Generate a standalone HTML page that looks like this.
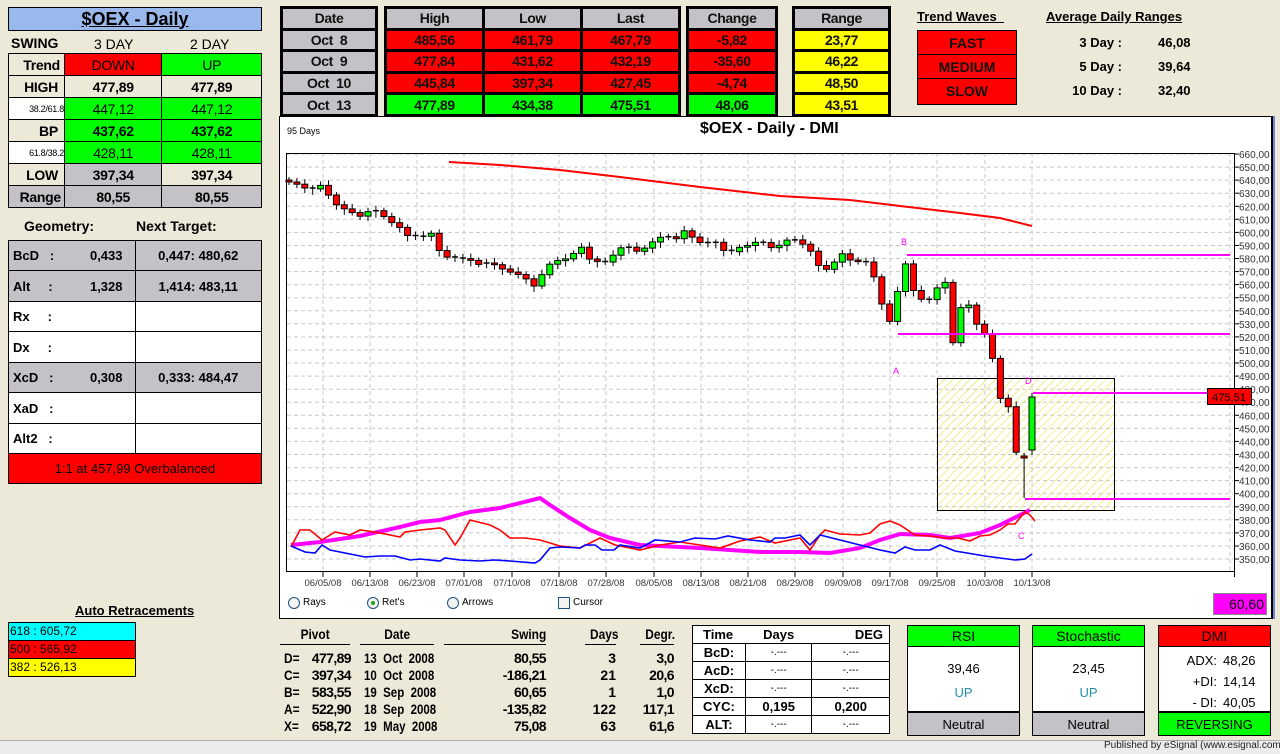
<!DOCTYPE html>
<html><head><meta charset="utf-8"><style>
*{box-sizing:border-box;margin:0;padding:0}
body{width:1280px;height:754px;background:#ece9d8;font-family:"Liberation Sans",Arial,sans-serif;position:relative;overflow:hidden;color:#000}
.a{position:absolute}
.c{display:flex;align-items:center;justify-content:center}
.t{position:absolute;border-collapse:collapse}
.t td{border:1px solid #000;text-align:center;font-size:14px;padding:0}
.red{background:#ff0000}.grn{background:#00ff00}.gry{background:#c4c2c6}.yel{background:#ffff00}.wht{background:#fff}.bg{background:#ece9d8}
.bx{position:absolute;border:3px solid #000;border-collapse:collapse}
.bx td{border:3px solid #000;text-align:center;font-size:14px;padding:0;font-weight:bold;letter-spacing:-0.4px;color:#111}
.lt td{font-weight:bold;letter-spacing:-0.3px}
.n{font-size:14px;transform:scaleX(.85);transform-origin:left center;white-space:nowrap}
</style></head><body>

<div class="a c" style="left:8px;top:7px;width:254px;height:24px;background:#99b9ec;border:1px solid #000;font-weight:bold;font-size:18px;text-decoration:underline">$OEX - Daily</div>
<div class="a" style="left:11px;top:35px;font-size:14px;font-weight:bold">SWING</div>
<div class="a" style="left:94px;top:36px;font-size:14px">3 DAY</div>
<div class="a" style="left:190px;top:36px;font-size:14px">2 DAY</div>
<table class="t lt" style="left:8px;top:53px;width:254px">
<colgroup><col style="width:56px"><col style="width:98px"><col style="width:100px"></colgroup>
<tr style="height:22px"><td class="bg" style="text-align:right;padding-right:4px">Trend</td><td class="red" style="font-weight:normal">DOWN</td><td class="grn" style="font-weight:normal">UP</td></tr>
<tr style="height:22px"><td class="bg" style="text-align:right;padding-right:6px">HIGH</td><td class="bg">477,89</td><td class="bg">477,89</td></tr>
<tr style="height:22px"><td class="wht" style="font-size:9px;text-align:right;font-weight:normal">38.2/61.8</td><td class="grn" style="font-weight:normal">447,12</td><td class="grn" style="font-weight:normal">447,12</td></tr>
<tr style="height:22px"><td class="bg" style="text-align:right;padding-right:6px">BP</td><td class="grn">437,62</td><td class="grn">437,62</td></tr>
<tr style="height:22px"><td class="wht" style="font-size:9px;text-align:right;font-weight:normal">61.8/38.2</td><td class="grn" style="font-weight:normal">428,11</td><td class="grn" style="font-weight:normal">428,11</td></tr>
<tr style="height:22px"><td class="bg" style="text-align:right;padding-right:6px">LOW</td><td class="gry">397,34</td><td class="bg">397,34</td></tr>
<tr style="height:22px"><td class="gry" style="text-align:right;padding-right:3px">Range</td><td class="gry">80,55</td><td class="gry">80,55</td></tr>
</table>
<div class="a" style="left:24px;top:218px;font-size:14px;font-weight:bold">Geometry:</div>
<div class="a" style="left:136px;top:218px;font-size:14px;font-weight:bold">Next Target:</div>
<table class="t" style="left:8px;top:240px;width:254px">
<colgroup><col style="width:127px"><col style="width:127px"></colgroup>
<tr style="height:30px" class="gry"><td style="text-align:left;padding-left:4px;font-size:13px;font-weight:bold">BcD&nbsp;&nbsp;&nbsp;:<span style="float:right;margin-right:12px">0,433</span></td><td style="font-size:13px;font-weight:bold">0,447: 480,62</td></tr>
<tr style="height:31px" class="gry"><td style="text-align:left;padding-left:4px;font-size:13px;font-weight:bold">Alt&nbsp;&nbsp;&nbsp;&nbsp;&nbsp;:<span style="float:right;margin-right:12px">1,328</span></td><td style="font-size:13px;font-weight:bold">1,414: 483,11</td></tr>
<tr style="height:30px" class="wht"><td style="text-align:left;padding-left:4px;font-size:13px;font-weight:bold">Rx&nbsp;&nbsp;&nbsp;&nbsp;&nbsp;:</td><td></td></tr>
<tr style="height:31px" class="wht"><td style="text-align:left;padding-left:4px;font-size:13px;font-weight:bold">Dx&nbsp;&nbsp;&nbsp;&nbsp;&nbsp;:</td><td></td></tr>
<tr style="height:30px" class="gry"><td style="text-align:left;padding-left:4px;font-size:13px;font-weight:bold">XcD&nbsp;&nbsp;&nbsp;:<span style="float:right;margin-right:12px">0,308</span></td><td style="font-size:13px;font-weight:bold">0,333: 484,47</td></tr>
<tr style="height:31px" class="wht"><td style="text-align:left;padding-left:4px;font-size:13px;font-weight:bold">XaD&nbsp;&nbsp;&nbsp;:</td><td></td></tr>
<tr style="height:30px" class="wht"><td style="text-align:left;padding-left:4px;font-size:13px;font-weight:bold">Alt2&nbsp;&nbsp;&nbsp;:</td><td></td></tr>
<tr style="height:30px" class="red"><td colspan="2" style="font-size:13px">1:1 at 457,99 Overbalanced</td></tr>
</table>
<div class="a" style="left:75px;top:603px;font-size:13px;font-weight:bold;text-decoration:underline">Auto Retracements</div>
<div class="a" style="left:8px;top:622px;width:128px;height:55px;border:1px solid #000;font-size:12px">
<div style="height:18px;background:#00ffff;border-bottom:1px solid #000;padding-left:1px;line-height:17px">618 : 605,72</div>
<div style="height:18px;background:#ff0000;border-bottom:1px solid #000;padding-left:1px;line-height:17px">500 : 565,92</div>
<div style="height:17px;background:#ffff00;padding-left:1px;line-height:17px">382 : 526,13</div>
</div>

<table class="bx" style="left:280px;top:6px;width:98px;height:111px">
<tr><td class="gry">Date</td></tr><tr><td class="gry">Oct&nbsp; 8</td></tr><tr><td class="gry">Oct&nbsp; 9</td></tr><tr><td class="gry">Oct&nbsp; 10</td></tr><tr><td class="gry">Oct&nbsp; 13</td></tr>
</table>
<table class="bx" style="left:384px;top:6px;width:297px;height:111px">
<tr class="gry"><td>High</td><td>Low</td><td>Last</td></tr>
<tr class="red"><td>485,56</td><td>461,79</td><td>467,79</td></tr>
<tr class="red"><td>477,84</td><td>431,62</td><td>432,19</td></tr>
<tr class="red"><td>445,84</td><td>397,34</td><td>427,45</td></tr>
<tr class="grn"><td>477,89</td><td>434,38</td><td>475,51</td></tr>
</table>
<table class="bx" style="left:686px;top:6px;width:92px;height:111px">
<tr><td class="gry">Change</td></tr><tr><td class="red">-5,82</td></tr><tr><td class="red">-35,60</td></tr><tr><td class="red">-4,74</td></tr><tr><td class="grn">48,06</td></tr>
</table>
<table class="bx" style="left:792px;top:6px;width:99px;height:111px">
<tr><td class="gry">Range</td></tr><tr><td class="yel">23,77</td></tr><tr><td class="yel">46,22</td></tr><tr><td class="yel">48,50</td></tr><tr><td class="yel">43,51</td></tr>
</table>
<div class="a" style="left:917px;top:9px;font-size:13px;font-weight:bold;text-decoration:underline">Trend Waves&nbsp;&nbsp;</div>
<div class="a" style="left:917px;top:30px;width:100px;height:75px;border:1px solid #000;background:#f00;font-size:14px;font-weight:bold;color:#111">
<div class="c" style="height:24px;border-bottom:1px solid #000">FAST</div>
<div class="c" style="height:24px;border-bottom:1px solid #000">MEDIUM</div>
<div class="c" style="height:24px">SLOW</div></div>
<div class="a" style="left:1046px;top:9px;font-size:13px;font-weight:bold;text-decoration:underline">Average Daily Ranges</div>
<div class="a" style="left:1040px;top:31px;width:82px;text-align:right;font-size:13px;line-height:24px;font-weight:bold">3 Day :<br>5 Day :<br>10 Day :</div>
<div class="a" style="left:1158px;top:31px;font-size:13px;line-height:24px;font-weight:bold">46,08<br>39,64<br>32,40</div>

<div class="a" style="left:279px;top:116px;width:994px;height:503px;background:#fff;border:1px solid #000;border-right:2px solid #000"></div>
<div class="a" style="left:1273px;top:116px;width:2px;height:503px;background:#6a86d6"></div>
<div class="a" style="left:287px;top:126px;font-size:9px">95 Days</div>
<div class="a" style="left:700px;top:120px;font-size:16px;font-weight:bold">$OEX - Daily - DMI</div>
<svg id="ch" class="a" style="left:0;top:0" width="1280" height="754" xmlns="http://www.w3.org/2000/svg"></svg>
<div class="a" style="left:1213px;top:593px;width:54px;height:22px;background:#ff00ff;border:1px solid #888;font-size:14px;text-align:right;padding-right:2px;line-height:21px">60,60</div>
<div class="a" style="left:288px;top:597px;width:12px;height:12px;border:1px solid #1c5180;border-radius:50%;background:#f4f4f0"></div>
<div class="a" style="left:303px;top:597px;font-size:10px">Rays</div>
<div class="a" style="left:367px;top:597px;width:12px;height:12px;border:1px solid #1c5180;border-radius:50%;background:#f4f4f0"><div style="width:4px;height:4px;background:#21a121;border-radius:50%;margin:3px"></div></div>
<div class="a" style="left:382px;top:597px;font-size:10px">Ret's</div>
<div class="a" style="left:447px;top:597px;width:12px;height:12px;border:1px solid #1c5180;border-radius:50%;background:#f4f4f0"></div>
<div class="a" style="left:462px;top:597px;font-size:10px">Arrows</div>
<div class="a" style="left:558px;top:597px;width:12px;height:12px;border:1px solid #1c5180;background:#f4f4f0"></div>
<div class="a" style="left:573px;top:597px;font-size:10px">Cursor</div>

<div class="a" style="left:280px;top:626px;width:70px;border-bottom:1px solid #000;text-align:center;font-weight:bold"><span class="n" style="display:inline-block;transform-origin:center">Pivot</span></div>
<div class="a" style="left:360px;top:626px;width:74px;border-bottom:1px solid #000;text-align:center;font-weight:bold"><span class="n" style="display:inline-block;transform-origin:center">Date</span></div>
<div class="a" style="left:444px;top:626px;width:102px;border-bottom:1px solid #000;text-align:right;font-weight:bold"><span class="n" style="display:inline-block;transform-origin:right">Swing</span></div>
<div class="a" style="left:585px;top:626px;width:31px;border-bottom:1px solid #000;text-align:right;font-weight:bold"><span class="n" style="display:inline-block;transform-origin:right">Days</span></div>
<div class="a" style="left:640px;top:626px;width:34px;border-bottom:1px solid #000;text-align:right;font-weight:bold"><span class="n" style="display:inline-block;transform-origin:right">Degr.</span></div>
<div class="a" style="left:284px;top:650px;font-size:14px;line-height:17px;transform:scaleX(.85);transform-origin:left;font-weight:bold">D=<br>C=<br>B=<br>A=<br>X=</div>
<div class="a" style="left:296px;top:650px;width:55px;text-align:right;font-size:14px;line-height:17px;font-weight:bold;letter-spacing:-0.6px">477,89<br>397,34<br>583,55<br>522,90<br>658,72</div>
<div class="a" style="left:364px;top:650px;font-size:14px;line-height:17px;white-space:pre;transform:scaleX(.82);transform-origin:left;font-weight:bold">13  Oct  2008
10  Oct  2008
19  Sep  2008
18  Sep  2008
19  May  2008</div>
<div class="a" style="left:476px;top:650px;width:70px;text-align:right;font-size:14px;line-height:17px;font-weight:bold;letter-spacing:-0.6px">80,55<br>-186,21<br>60,65<br>-135,82<br>75,08</div>
<div class="a" style="left:580px;top:650px;width:36px;text-align:right;font-size:14px;line-height:17px;font-weight:bold">3<br>21<br>1<br>122<br>63</div>
<div class="a" style="left:626px;top:650px;width:48px;text-align:right;font-size:14px;line-height:17px;font-weight:bold;letter-spacing:-0.6px">3,0<br>20,6<br>1,0<br>117,1<br>61,6</div>

<table class="t" style="left:692px;top:625px;width:198px;background:#fff">
<colgroup><col style="width:53px"><col style="width:67px"><col style="width:78px"></colgroup>
<tr style="height:18px"><td style="border:none;border-top:1px solid #000;border-left:1px solid #000;text-align:left;padding-left:10px;font-size:13px;font-weight:bold">Time</td><td style="border:none;border-top:1px solid #000;font-size:13px;font-weight:bold">Days</td><td style="border:none;border-top:1px solid #000;border-right:1px solid #000;text-align:right;padding-right:6px;font-size:13px;font-weight:bold">DEG</td></tr>
<tr style="height:18px"><td style="font-size:13px;font-weight:bold">BcD:</td><td style="font-size:10px">-.---</td><td style="font-size:10px">-.---</td></tr>
<tr style="height:18px"><td style="font-size:13px;font-weight:bold">AcD:</td><td style="font-size:10px">-.---</td><td style="font-size:10px">-.---</td></tr>
<tr style="height:18px"><td style="font-size:13px;font-weight:bold">XcD:</td><td style="font-size:10px">-.---</td><td style="font-size:10px">-.---</td></tr>
<tr style="height:18px"><td style="font-size:13px;font-weight:bold">CYC:</td><td style="font-size:13px;font-weight:bold">0,195</td><td style="font-size:13px;font-weight:bold">0,200</td></tr>
<tr style="height:18px"><td style="font-size:13px;font-weight:bold">ALT:</td><td style="font-size:10px">-.---</td><td style="font-size:10px">-.---</td></tr>
</table>

<div class="a" style="left:907px;top:625px;width:113px;height:111px;border:1px solid #000;background:#fff;font-size:13px">
<div class="c grn" style="height:21px;border-bottom:1px solid #000;font-size:14px">RSI</div>
<div style="text-align:center;margin-top:14px">39,46</div>
<div style="text-align:center;margin-top:9px;color:#1f8fa8">UP</div>
<div class="c gry" style="position:absolute;bottom:0;left:0;right:0;height:24px;border-top:2px solid #000">Neutral</div></div>
<div class="a" style="left:1032px;top:625px;width:113px;height:111px;border:1px solid #000;background:#fff;font-size:13px">
<div class="c grn" style="height:21px;border-bottom:1px solid #000;font-size:14px">Stochastic</div>
<div style="text-align:center;margin-top:14px">23,45</div>
<div style="text-align:center;margin-top:9px;color:#1f8fa8">UP</div>
<div class="c gry" style="position:absolute;bottom:0;left:0;right:0;height:24px;border-top:2px solid #000">Neutral</div></div>
<div class="a" style="left:1158px;top:625px;width:113px;height:111px;border:1px solid #000;background:#fff;font-size:13px">
<div class="c red" style="height:21px;border-bottom:1px solid #000;font-size:14px">DMI</div>
<div style="position:absolute;left:0;top:24px;width:58px;text-align:right;line-height:21px">ADX:<br>+DI:<br>- DI:</div>
<div style="position:absolute;left:64px;top:24px;line-height:21px">48,26<br>14,14<br>40,05</div>
<div class="c grn" style="position:absolute;bottom:0;left:0;right:0;height:24px;border-top:2px solid #000">REVERSING</div></div>

<div class="a" style="left:0;top:740px;width:1280px;height:14px;background:#ececec;border-top:1px solid #b0b0b0"></div>
<div class="a" style="left:1104px;top:740px;font-size:10px;color:#222;white-space:nowrap">Published by eSignal (www.esignal.com)</div>

<script>
var s=document.getElementById('ch'),h='';
function Y(p){return 154+(660-p)*1.3065}
h+='<defs><pattern id="hp" width="6" height="6" patternUnits="userSpaceOnUse" patternTransform="rotate(45)"><line x1="0" y1="0" x2="0" y2="6" stroke="#e8e020" stroke-width="1"/></pattern></defs>';
for(var p=350;p<=660;p+=10){var y=Y(p).toFixed(1);h+='<line x1="287" y1="'+y+'" x2="1233" y2="'+y+'" stroke="#c8c8c8" stroke-dasharray="4,3"/>';
h+='<line x1="1234" y1="'+y+'" x2="1239" y2="'+y+'" stroke="#000"/>';
h+='<text x="1239" y="'+(+y+4)+'" font-size="10" fill="#333" font-family="Liberation Sans">'+p+',00</text>';}
var dx=[323,370,417,464,512,559,606,654,701,748,795,843,890,937,985,1032],dl=['06/05/08','06/13/08','06/23/08','07/01/08','07/10/08','07/18/08','07/28/08','08/05/08','08/13/08','08/21/08','08/29/08','09/09/08','09/17/08','09/25/08','10/03/08','10/13/08'];
for(var i=0;i<dx.length;i++){h+='<line x1="'+dx[i]+'" y1="153" x2="'+dx[i]+'" y2="571" stroke="#c8c8c8" stroke-dasharray="4,3"/><line x1="'+dx[i]+'" y1="571" x2="'+dx[i]+'" y2="577" stroke="#000"/>';
h+='<text x="'+dx[i]+'" y="586" font-size="9.5" text-anchor="middle" fill="#333" font-family="Liberation Sans">'+dl[i]+'</text>';}
h+='<line x1="1230" y1="153" x2="1230" y2="571" stroke="#c8c8c8" stroke-dasharray="4,3"/>';
h+='<path d="M286.5 571V153.5H1234.5V577" fill="none" stroke="#000"/><line x1="286" y1="571.5" x2="1234" y2="571.5" stroke="#000"/>';
h+='<rect x="937.5" y="378.5" width="177" height="132" fill="url(#hp)" stroke="#000"/>';
h+='<polyline fill="none" stroke="#f00" stroke-width="2" points="449,162 500,165 560,170 620,177 700,187 780,196 850,200 900,206 960,213 1000,218 1032,226"/>';
var k=[[289,182],[300,185],[308,190],[316,188],[323,184],[331,200],[340,208],[350,210],[357,218],[367,212],[375,210],[382,215],[390,222],[398,225],[405,235],[415,237],[425,236],[432,233],[441,255],[450,258],[460,258],[470,260],[480,265],[490,262],[500,268],[510,272],[520,275],[528,280],[536,288],[544,270],[552,262],[560,260],[570,258],[580,245],[590,260],[600,262],[608,262],[617,250],[626,245],[635,252],[645,248],[655,240],[665,235],[675,240],[685,230],[695,240],[705,245],[714,240],[722,250],[731,252],[740,247],[750,245],[760,240],[770,248],[780,245],[790,238],[800,242],[810,250],[820,268],[830,270],[840,252],[850,260],[860,262],[870,262],[880,300],[890,322],[898,290],[905,262],[913,290],[922,300],[929,300],[937,288],[945,282],[953,343],[961,307],[969,305],[977,325],[985,335],[993,360],[1000,398],[1008,405],[1016,452],[1024,458],[1032,397]];
var N=95,step=(1032-289)/(N-1);
function cy(x){for(var j=1;j<k.length;j++){if(x<=k[j][0]){var a=k[j-1],b=k[j];return a[1]+(b[1]-a[1])*(x-a[0])/(b[0]-a[0]);}}return k[k.length-1][1];}
var prev=cy(289)-2;
for(var i=0;i<N;i++){var x=289+i*step,c=cy(x),o=prev;if(i==N-1){o=450;}if(i==N-2){o=456;c=458}
var t=Math.min(o,c),b=Math.max(o,c),up=c<o;var hi=t-3-(i%3),lo=b+3+(i%4);if(i==N-2)lo=498;
h+='<line x1="'+x.toFixed(1)+'" y1="'+hi+'" x2="'+x.toFixed(1)+'" y2="'+lo+'" stroke="#000"/>';
if(b-t<1.5)h+='<line x1="'+(x-3).toFixed(1)+'" y1="'+t.toFixed(1)+'" x2="'+(x+3).toFixed(1)+'" y2="'+t.toFixed(1)+'" stroke="#000" stroke-width="1.5"/>';
else h+='<rect x="'+(x-3).toFixed(1)+'" y="'+t.toFixed(1)+'" width="6" height="'+(b-t).toFixed(1)+'" fill="'+(up?'#00ff00':'#ff0000')+'" stroke="#000" stroke-width="1"/>';
prev=c;}
h+='<g stroke="#ff00ff" stroke-width="2"><line x1="907" y1="255" x2="1230" y2="255"/><line x1="898" y1="334" x2="1230" y2="334"/><line x1="1033" y1="393" x2="1230" y2="393"/><line x1="1025" y1="499" x2="1230" y2="499"/></g>';
h+='<g font-size="9" fill="#ff00ff" font-family="Liberation Sans"><text x="901" y="245">B</text><text x="893" y="374">A</text><text x="1025" y="384">D</text><text x="1018" y="539">C</text></g>';
h+='<polyline fill="none" stroke="#ff00ff" stroke-width="4" points="291,545 320,542 360,536 400,527 420,522 440,520 470,512 500,508 540,498 550,505 570,518 590,530 610,538 640,545 660,546 700,548 760,552 800,552 830,553 860,548 880,540 900,534 930,535 950,538 980,533 1000,525 1020,515 1030,510"/>';
h+='<polyline fill="none" stroke="#f00" stroke-width="1.6" points="291,547 300,530 310,530 322,540 335,532 350,535 360,530 375,532 390,535 400,537 405,532 420,530 440,528 445,530 455,545 460,538 470,520 490,525 500,530 510,538 525,538 540,540 560,546 580,548 600,538 615,545 640,550 660,545 680,542 700,545 720,548 740,541 760,537 775,543 800,538 810,550 820,535 825,530 840,534 860,535 870,533 880,524 890,521 900,525 915,535 930,536 945,538 958,538 970,541 980,536 990,535 1000,530 1008,524 1015,524 1025,512 1030,515 1035,521"/>';
h+='<polyline fill="none" stroke="#00f" stroke-width="1.6" points="291,546 305,552 315,553 322,545 330,550 350,554 365,557 380,556 395,556 410,560 420,559 440,561 445,558 460,560 480,561 495,560 510,561 535,563 540,560 550,548 560,547 580,548 585,545 595,545 602,550 614,550 620,545 640,548 655,540 680,542 695,538 715,539 728,536 750,540 770,542 775,538 785,538 800,535 810,545 820,535 840,540 860,545 880,550 895,553 905,547 915,550 930,550 940,545 955,551 985,556 1000,558 1015,560 1025,559 1032,554"/>';
h+='<rect x="1207.5" y="388.5" width="44" height="16" fill="#f00" stroke="#000"/><text x="1229" y="401" font-size="11" text-anchor="middle" font-family="Liberation Sans">475,51</text>';
s.innerHTML=h;
</script>
</body></html>
